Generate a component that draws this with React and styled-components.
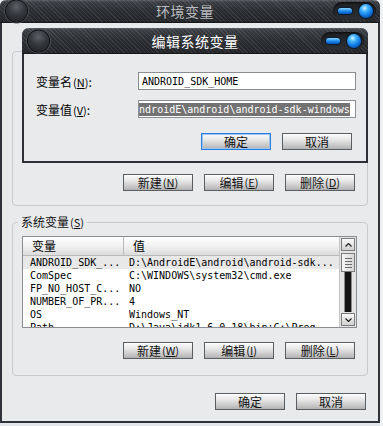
import React from "react";
import styled, { createGlobalStyle } from "styled-components";

const GlobalStyle = createGlobalStyle`
  html, body {
    margin: 0;
    padding: 0;
    background: #e3e6ea;
  }
  body {
    font-family: "Noto Sans CJK SC", "DejaVu Sans", sans-serif;
    font-size: 12px;
    color: #000;
  }
`;

const userButtons = [
  { label: "新建", key: "N" },
  { label: "编辑", key: "E" },
  { label: "删除", key: "D" }
];

const sysButtons = [
  { label: "新建", key: "W" },
  { label: "编辑", key: "I" },
  { label: "删除", key: "L" }
];

const rows = [
  { name: "ANDROID_SDK_...", value: "D:\\AndroidE\\android\\android-sdk...", selected: true },
  { name: "ComSpec", value: "C:\\WINDOWS\\system32\\cmd.exe" },
  { name: "FP_NO_HOST_C...", value: "NO" },
  { name: "NUMBER_OF_PR...", value: "4" },
  { name: "OS", value: "Windows_NT" },
  { name: "Path", value: "D:\\Java\\jdk1.6.0_18\\bin;C:\\Prog..." }
];

const TitleBar = ({ title, active }) => (
  <Bar active={active}>
    <Knob />
    <BarTitle active={active}>{title}</BarTitle>
    <Controls>
      <Pill />
      <Orb />
    </Controls>
  </Bar>
);

const Mnemonic = ({ children, k }) => (
  <>
    {children}
    <Key>
      (<u>{k}</u>)
    </Key>
  </>
);

const App = () => {
  return (
    <Screen>
      <GlobalStyle />
      <OuterWindow>
        <TitleBar title="环境变量" />
        <OuterBody>
          <Group height={155} top={28}>
            <GroupFill />
            <ButtonRow>
              {userButtons.map(b => (
                <Button key={b.key}>
                  <Mnemonic k={b.key}>{b.label}</Mnemonic>
                </Button>
              ))}
            </ButtonRow>
          </Group>

          <Group height={154} top={16}>
            <Legend>
              <Mnemonic k="S">系统变量</Mnemonic>
            </Legend>
            <List>
              <ListMain>
                <ListHeader>
                  <HeadCell width={101}>变量</HeadCell>
                  <HeadCell>值</HeadCell>
                </ListHeader>
                {rows.map(r => (
                  <Row key={r.name} selected={r.selected}>
                    <NameCell>{r.name}</NameCell>
                    <ValueCell>{r.value}</ValueCell>
                  </Row>
                ))}
              </ListMain>
              <ScrollBar>
                <ScrollButton>
                  <svg width="7" height="4" viewBox="0 0 7 4">
                    <path d="M0.5 3.5 L3.5 0.5 L6.5 3.5" fill="none" stroke="#222" strokeWidth="1.2" />
                  </svg>
                </ScrollButton>
                <Thumb>
                  <Grip />
                  <Grip />
                  <Grip />
                  <Grip />
                </Thumb>
                <Track />
                <ScrollButton>
                  <svg width="7" height="4" viewBox="0 0 7 4">
                    <path d="M0.5 0.5 L3.5 3.5 L6.5 0.5" fill="none" stroke="#222" strokeWidth="1.2" />
                  </svg>
                </ScrollButton>
              </ScrollBar>
            </List>
            <ButtonRow>
              {sysButtons.map(b => (
                <Button key={b.key}>
                  <Mnemonic k={b.key}>{b.label}</Mnemonic>
                </Button>
              ))}
            </ButtonRow>
          </Group>

          <Footer>
            <Button>确定</Button>
            <Button>取消</Button>
          </Footer>
        </OuterBody>
      </OuterWindow>

      <Dialog>
        <TitleBar title="编辑系统变量" active />
        <DialogBody>
          <FieldRow>
            <FieldLabel>
              <Mnemonic k="N">变量名</Mnemonic>:
            </FieldLabel>
            <Field>
              <FieldText>ANDROID_SDK_HOME</FieldText>
            </Field>
          </FieldRow>
          <FieldRow>
            <FieldLabel>
              <Mnemonic k="V">变量值</Mnemonic>:
            </FieldLabel>
            <Field selected>
              <FieldText offset={-26}>D:\AndroidE\android\android-sdk-windows</FieldText>
            </Field>
          </FieldRow>
          <DialogButtons>
            <Button primary>确定</Button>
            <Button>取消</Button>
          </DialogButtons>
        </DialogBody>
      </Dialog>
    </Screen>
  );
};

const Screen = styled.div`
  position: relative;
  width: 383px;
  height: 426px;
  overflow: hidden;
  background: linear-gradient(90deg, #e3e6ea 0, #e3e6ea 380px, #eef0f2 380px);
`;

const OuterWindow = styled.div`
  width: 380px;
  height: 423px;
  box-sizing: border-box;
  background: #e9eaec;
  border: 2px solid #30343a;
  border-top: none;
  border-radius: 6px 6px 0 0;
  display: flex;
  flex-direction: column;
`;

const Bar = styled.div`
  position: relative;
  flex: none;
  height: ${props => (props.active ? 25 : 22)}px;
  margin: 0 -2px;
  display: flex;
  align-items: center;
  justify-content: center;
  border-radius: 7px 7px 0 0;
  border-bottom: 1px solid #15171a;
  background:
    repeating-linear-gradient(45deg, rgba(255, 255, 255, 0.08) 0 1px, transparent 1px 3px),
    linear-gradient(#5a5e64 0, #3a3d42 2px, #2b2e33 45%, #222428 100%);
`;

const Knob = styled.div`
  position: absolute;
  left: 6px;
  top: 50%;
  transform: translateY(-50%);
  width: 21px;
  height: 21px;
  border-radius: 50%;
  background: radial-gradient(circle at 50% 30%, #5c6066 0, #35383d 45%, #1c1d20 100%);
  box-shadow: 0 0 0 1px #111, 0 0 0 2px #4a4e54;
`;

const BarTitle = styled.span`
  font-size: 14px;
  line-height: 18px;
  color: ${props => (props.active ? "#ffffff" : "#b9bbbe")};
  letter-spacing: 0.5px;
  margin-right: ${props => (props.active ? 0 : 10)}px;
`;

const Controls = styled.div`
  position: absolute;
  right: 4px;
  top: 50%;
  transform: translateY(-50%);
  height: 18px;
  padding: 0 3px 0 5px;
  display: flex;
  align-items: center;
  gap: 7px;
  border-radius: 9px;
  background: linear-gradient(#1d1f22, #2d3034);
  box-shadow: inset 0 1px 2px #0a0a0a;
`;

const Pill = styled.div`
  width: 14px;
  height: 6px;
  border-radius: 3px;
  background: linear-gradient(#8fd6ff, #1d8df0 50%, #0752b8);
  box-shadow: 0 0 0 1px #0b1a2e;
`;

const Orb = styled.div`
  width: 14px;
  height: 14px;
  border-radius: 50%;
  background: radial-gradient(circle at 40% 30%, #d4f2ff 0, #45b6ff 25%, #0c72dc 60%, #053680 100%);
  box-shadow: 0 0 0 1px #0b1a2e;
`;

const OuterBody = styled.div`
  flex: 1;
  padding: 0 10px;
  display: flex;
  flex-direction: column;
`;

const Group = styled.div`
  position: relative;
  margin-top: ${props => props.top}px;
  height: ${props => props.height}px;
  box-sizing: border-box;
  border: 1px solid #c7c9cc;
  border-radius: 4px;
  padding: 13px 10px 14px 9px;
  display: flex;
  flex-direction: column;
`;

const GroupFill = styled.div`
  flex: 1;
`;

const Legend = styled.span`
  position: absolute;
  left: 5px;
  top: -9px;
  padding: 0 3px;
  background: #e9eaec;
  line-height: 16px;
  color: #111;
`;

const Key = styled.span`
  font-size: 11px;
  margin-left: 1px;
`;

const ButtonRow = styled.div`
  display: flex;
  justify-content: flex-end;
  gap: 11px;
  margin-top: 14px;
  padding-right: 2px;
`;

const Button = styled.div`
  width: 70px;
  height: 17px;
  box-sizing: border-box;
  display: flex;
  align-items: center;
  justify-content: center;
  font-size: 12px;
  line-height: 15px;
  border: 1px solid ${props => (props.primary ? "#2b7be0" : "#5a5d61")};
  box-shadow: ${props => (props.primary ? "inset 0 0 0 1px #9cc6f2" : "inset 0 1px 0 #ffffff")};
  background: linear-gradient(#fbfbfb 0, #e9e9e9 35%, #c9c9c9 75%, #b2b2b2 100%);
  color: #111;
`;

const List = styled.div`
  display: flex;
  height: 92px;
  box-sizing: border-box;
  border: 1px solid #8a8d91;
  background: #ffffff;
  overflow: hidden;
`;

const ListMain = styled.div`
  flex: 1;
  overflow: hidden;
`;

const ListHeader = styled.div`
  display: flex;
  height: 18px;
  background: linear-gradient(#ffffff, #f1f1f1 50%, #dcdcdc);
  border-bottom: 1px solid #b9b9b9;
`;

const HeadCell = styled.div`
  ${props => (props.width ? `width: ${props.width}px; flex: none;` : "flex: 1;")}
  box-sizing: border-box;
  padding-left: 9px;
  font-size: 12px;
  line-height: 18px;
  border-right: ${props => (props.width ? "1px solid #b9b9b9" : "none")};
`;

const Row = styled.div`
  display: flex;
  height: 13px;
  align-items: center;
  background: ${props => (props.selected ? "#e8e8e8" : "transparent")};
  font-family: "DejaVu Sans Mono", "Liberation Mono", monospace;
  font-size: 10px;
  line-height: 13px;
  white-space: nowrap;
`;

const NameCell = styled.div`
  width: 99px;
  flex: none;
  padding-left: 7px;
`;

const ValueCell = styled.div`
  flex: 1;
  height: 13px;
  overflow: hidden;
`;

const ScrollBar = styled.div`
  width: 16px;
  flex: none;
  display: flex;
  flex-direction: column;
  padding: 1px 0;
  background: #e4e4e4;
  border-left: 1px solid #c4c4c4;
`;

const ScrollButton = styled.div`
  height: 13px;
  margin: 0 1px;
  box-sizing: border-box;
  display: flex;
  align-items: center;
  justify-content: center;
  border: 1px solid #7c7c7c;
  background: linear-gradient(#fafafa, #d0d0d0);
`;

const Thumb = styled.div`
  height: 19px;
  margin: 2px 1px 0;
  box-sizing: border-box;
  border: 1px solid #7c7c7c;
  background: linear-gradient(90deg, #f6f6f6, #d6d6d6);
  display: flex;
  flex-direction: column;
  align-items: center;
  justify-content: center;
  gap: 2px;
`;

const Grip = styled.div`
  width: 7px;
  height: 1px;
  background: #6a6a6a;
`;

const Track = styled.div`
  flex: 1;
  margin: 0 4px 1px;
  background: #141414;
  border-left: 1px solid #8a8a8a;
  border-right: 1px solid #8a8a8a;
`;

const Footer = styled.div`
  display: flex;
  justify-content: flex-end;
  gap: 11px;
  margin-top: 17px;
  padding-right: 2px;
`;

const Dialog = styled.div`
  position: absolute;
  left: 22px;
  top: 28px;
  width: 346px;
  height: 135px;
  box-sizing: border-box;
  border: 2px solid #2c3035;
  border-top: none;
  border-radius: 7px 7px 0 0;
  background: #e9eaec;
  display: flex;
  flex-direction: column;
`;

const DialogBody = styled.div`
  flex: 1;
  padding: 18px 10px 0 12px;
  display: flex;
  flex-direction: column;
  gap: 10px;
`;

const FieldRow = styled.div`
  display: flex;
  align-items: center;
  height: 18px;
`;

const FieldLabel = styled.div`
  width: 102px;
  flex: none;
  font-size: 12px;
`;

const Field = styled.div`
  width: 218px;
  height: 18px;
  box-sizing: border-box;
  border: 1px solid #8a8d91;
  background: #ffffff;
  padding: 2px 2px;
  overflow: hidden;
  display: flex;
  align-items: center;
  ${props =>
    props.selected &&
    `
    > span {
      background: #737373;
      color: #ffffff;
      flex: none;
    }
  `}
`;

const FieldText = styled.span`
  display: block;
  font-family: "DejaVu Sans Mono", "Liberation Mono", monospace;
  font-size: 10px;
  line-height: 13px;
  white-space: nowrap;
  margin-left: ${props => props.offset || 1}px;
`;

const DialogButtons = styled.div`
  display: flex;
  justify-content: flex-end;
  gap: 11px;
  margin-top: 5px;
  padding-right: 4px;
`;

export default App;
